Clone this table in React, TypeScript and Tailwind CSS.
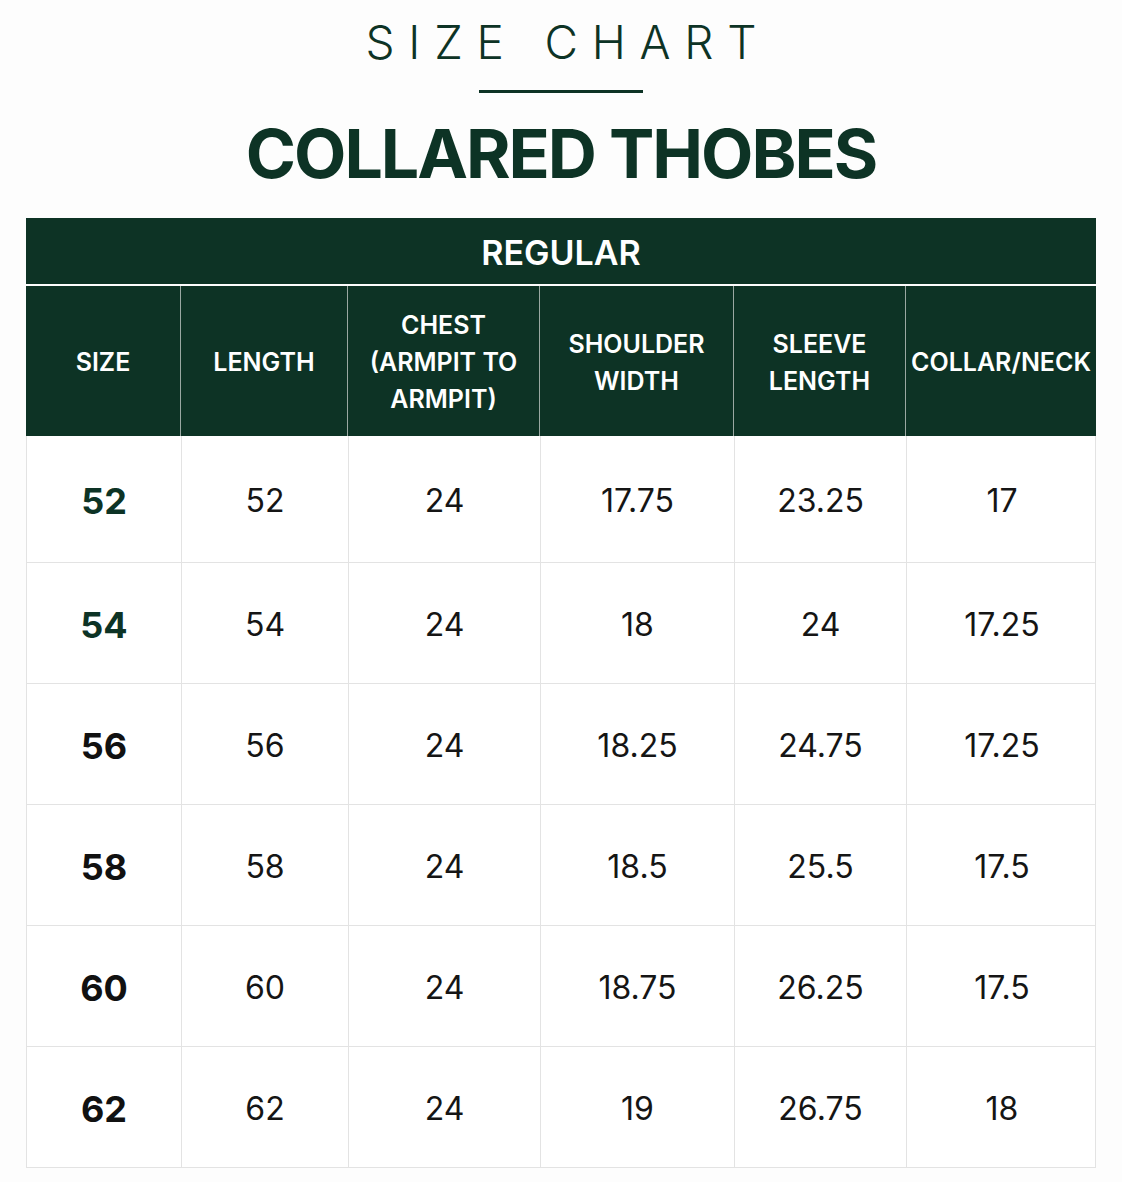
import React from 'react';

const headerLines: string[][] = [
  ['SIZE'],
  ['LENGTH'],
  ['CHEST', '(ARMPIT TO', 'ARMPIT)'],
  ['SHOULDER', 'WIDTH'],
  ['SLEEVE', 'LENGTH'],
  ['COLLAR/NECK'],
];

const rows = [
  { size: '52', green: true, values: ['52', '24', '17.75', '23.25', '17'] },
  { size: '54', green: true, values: ['54', '24', '18', '24', '17.25'] },
  { size: '56', green: false, values: ['56', '24', '18.25', '24.75', '17.25'] },
  { size: '58', green: false, values: ['58', '24', '18.5', '25.5', '17.5'] },
  { size: '60', green: false, values: ['60', '24', '18.75', '26.25', '17.5'] },
  { size: '62', green: false, values: ['62', '24', '19', '26.75', '18'] },
];

const gridCols = 'grid grid-cols-[154px_167px_192px_194px_172px_191px]';

const App: React.FC = () => {
  return (
    <div className="min-h-[1182px] w-[1122px] bg-[#fdfdfd] px-[26px] pt-[14px] font-['Inter',sans-serif]">
      <div className="flex flex-col items-center">
        <h2 className="pl-[0.3em] text-[46px] font-light leading-[56px] tracking-[0.3em] text-[#0d3325]">SIZE CHART</h2>
        <div className="mt-[20px] h-[3px] w-[164px] bg-[#0d3325]" />
        <h1 className="mt-[20px] text-[68px] font-bold leading-[80px] tracking-[-0.03em] text-[#0d3325]">COLLARED THOBES</h1>
      </div>

      <div className="mt-[25px] w-[1070px]">
        <div className="flex h-[66px] items-center justify-center bg-[#0d3325] pt-[2px] text-[34px] font-semibold text-white">
          REGULAR
        </div>
        <div className={`${gridCols} mt-[2px] bg-[#0d3325]`}>
          {headerLines.map((lines, i) => (
            <div
              key={i}
              className={`flex h-[150px] flex-col items-center justify-center pt-[3px] text-center text-[25px] font-semibold leading-[37px] text-white ${
                i > 0 ? 'border-l border-[#9aa8a2]' : ''
              }`}
            >
              {lines.map((l) => (
                <span key={l}>{l}</span>
              ))}
            </div>
          ))}
        </div>
        <div className="border-x border-b border-[#e3e3e3] bg-white">
          {rows.map((row, r) => (
            <div
              key={row.size}
              className={`${gridCols} ${r === 0 ? 'h-[126px]' : 'h-[121px] border-t border-[#e3e3e3]'}`}
            >
              <div
                className={`flex items-center justify-center pt-[3px] text-[36px] font-bold ${
                  row.green ? 'text-[#0d3325]' : 'text-[#111]'
                }`}
              >
                {row.size}
              </div>
              {row.values.map((v, c) => (
                <div
                  key={c}
                  className="flex items-center justify-center border-l border-[#e3e3e3] pt-[3px] text-[32px] font-normal text-[#151515]"
                >
                  {v}
                </div>
              ))}
            </div>
          ))}
        </div>
      </div>
    </div>
  );
};

export default App;
